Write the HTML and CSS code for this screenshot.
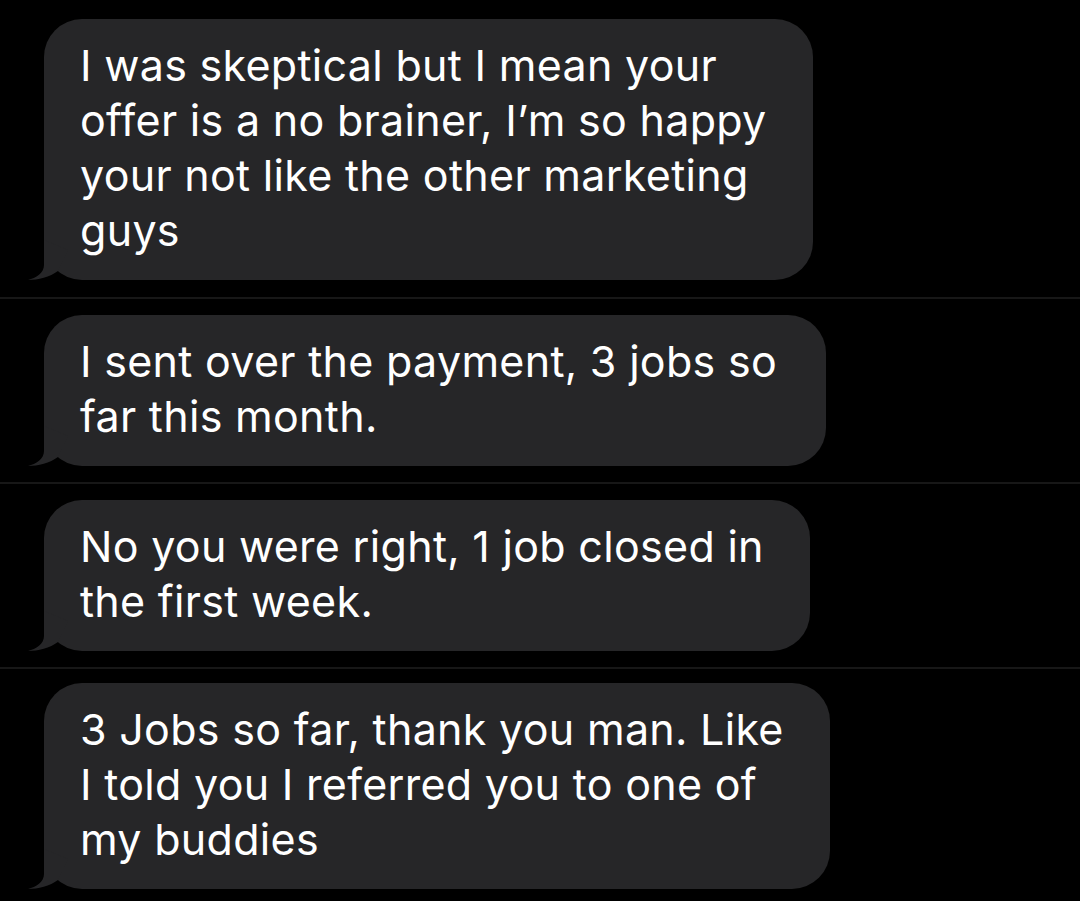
FILE: index.html
```html
<!DOCTYPE html>
<html>
<head>
<meta charset="utf-8">
<link rel="stylesheet" href="styles.css">
</head>
<body>
<div class="thread">
  <section class="shot first">
    <div class="bubble b1">
      <p>I was skeptical but I mean your<br>offer is a no brainer, I’m so happy<br>your not like the other marketing<br>guys</p>
      <svg class="tail" viewBox="0 0 50 40" width="50" height="40"><path d="M16,0 L16,25 C16,33 8,38 0,40 C10,40 22,37 30,31 L40,10 Z"/></svg>
    </div>
  </section>
  <section class="shot">
    <div class="bubble b2">
      <p>I sent over the payment, 3 jobs so<br>far this month.</p>
      <svg class="tail" viewBox="0 0 50 40" width="50" height="40"><path d="M16,0 L16,25 C16,33 8,38 0,40 C10,40 22,37 30,31 L40,10 Z"/></svg>
    </div>
  </section>
  <section class="shot">
    <div class="bubble b3">
      <p>No you were right, 1 job closed in<br>the first week.</p>
      <svg class="tail" viewBox="0 0 50 40" width="50" height="40"><path d="M16,0 L16,25 C16,33 8,38 0,40 C10,40 22,37 30,31 L40,10 Z"/></svg>
    </div>
  </section>
  <section class="shot last">
    <div class="bubble b4">
      <p>3 Jobs so far, thank you man. Like<br>I told you I referred you to one of<br>my buddies</p>
      <svg class="tail" viewBox="0 0 50 40" width="50" height="40"><path d="M16,0 L16,25 C16,33 8,38 0,40 C10,40 22,37 30,31 L40,10 Z"/></svg>
    </div>
  </section>
</div>
</body>
</html>
```

FILE: styles.css
```css
html, body {
  margin: 0;
  padding: 0;
  background: #000;
}
body {
  width: 1080px;
  height: 901px;
  overflow: hidden;
  font-family: "Inter", "Liberation Sans", sans-serif;
}
.thread {
  display: flex;
  flex-direction: column;
}
.shot {
  padding: 16px 0 16px 44px;
  border-bottom: 2px solid #171717;
}
.shot.first {
  padding-top: 19px;
  padding-bottom: 17px;
}
.shot.last {
  border-bottom: none;
  padding-top: 14px;
}
.bubble {
  position: relative;
  background: #262628;
  border-radius: 38px;
  padding: 19px 0 22px 36px;
  box-sizing: border-box;
}
.bubble p {
  margin: 0;
  color: #fff;
  font-size: 43px;
  line-height: 55px;
  letter-spacing: 0.3px;
}
.b1 { width: 769px; }
.b2 { width: 782px; }
.b3 { width: 766px; }
.b4 { width: 786px; }
.tail {
  position: absolute;
  left: -16px;
  bottom: 0;
  display: block;
}
.tail path {
  fill: #262628;
}
```
